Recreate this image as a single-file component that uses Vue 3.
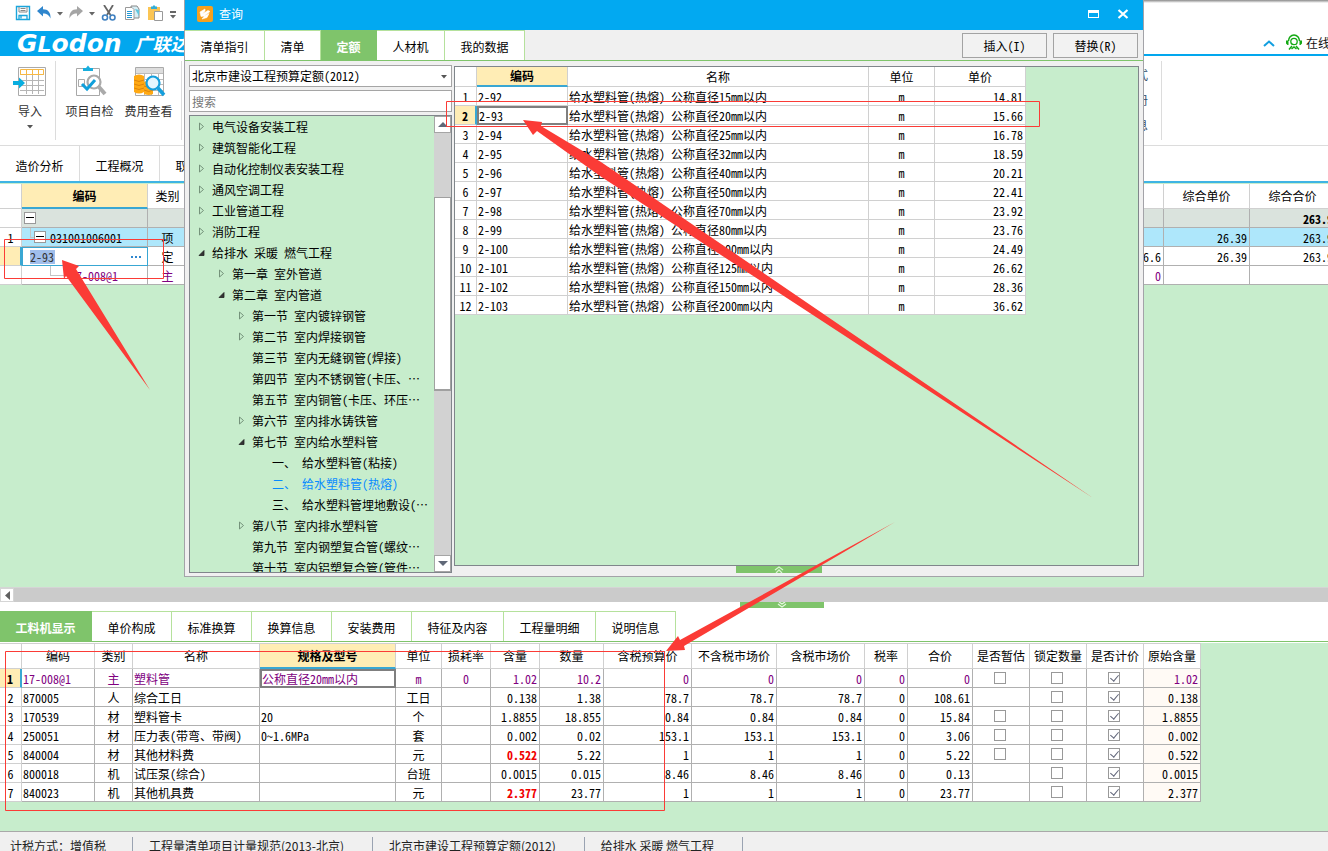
<script setup>
const dialogTabs = [
  { label: '清单指引', size: 'wide' },
  { label: '清单', size: 'short' },
  { label: '定额', size: 'short', active: true },
  { label: '人材机', size: 'mid' },
  { label: '我的数据', size: 'wide' },
]

const tree = [
  { level: 0, mark: 'closed', text: '电气设备安装工程' },
  { level: 0, mark: 'closed', text: '建筑智能化工程' },
  { level: 0, mark: 'closed', text: '自动化控制仪表安装工程' },
  { level: 0, mark: 'closed', text: '通风空调工程' },
  { level: 0, mark: 'closed', text: '工业管道工程' },
  { level: 0, mark: 'closed', text: '消防工程' },
  { level: 0, mark: 'open', text: '给排水 采暖 燃气工程' },
  { level: 1, mark: 'closed', text: '第一章 室外管道' },
  { level: 1, mark: 'open', text: '第二章 室内管道' },
  { level: 2, mark: 'closed', text: '第一节 室内镀锌钢管' },
  { level: 2, mark: 'closed', text: '第二节 室内焊接钢管' },
  { level: 2, text: '第三节 室内无缝钢管(焊接)' },
  { level: 2, text: '第四节 室内不锈钢管(卡压、…' },
  { level: 2, text: '第五节 室内铜管(卡压、环压…' },
  { level: 2, mark: 'closed', text: '第六节 室内排水铸铁管' },
  { level: 2, mark: 'open', text: '第七节 室内给水塑料管' },
  { level: 3, text: '一、 给水塑料管(粘接)' },
  { level: 3, text: '二、 给水塑料管(热熔)', active: true },
  { level: 3, text: '三、 给水塑料管埋地敷设(…' },
  { level: 2, mark: 'closed', text: '第八节 室内排水塑料管' },
  { level: 2, text: '第九节 室内钢塑复合管(螺纹…' },
  { level: 2, text: '第十节 室内铝塑复合管(管件…' },
]

const quota = [
  ['2-92', 15, '14.81'],
  ['2-93', 20, '15.66'],
  ['2-94', 25, '16.78'],
  ['2-95', 32, '18.59'],
  ['2-96', 40, '20.21'],
  ['2-97', 50, '22.41'],
  ['2-98', 70, '23.92'],
  ['2-99', 80, '23.76'],
  ['2-100', 100, '24.49'],
  ['2-101', 125, '26.62'],
  ['2-102', 150, '28.36'],
  ['2-103', 200, '36.62'],
]

const detailTabs = [
  { label: '工料机显示', active: true, wide: true },
  { label: '单价构成' },
  { label: '标准换算' },
  { label: '换算信息' },
  { label: '安装费用' },
  { label: '特征及内容', wide: true },
  { label: '工程量明细', wide: true },
  { label: '说明信息' },
]

const headers = ['编码', '类别', '名称', '规格及型号', '单位', '损耗率', '含量', '数量', '含税预算价', '不含税市场价', '含税市场价', '税率', '合价', '是否暂估', '锁定数量', '是否计价', '原始含量']

const rows = [
  { code: '17-008@1', kind: '主', name: '塑料管', spec: '公称直径20mm以内', unit: 'm', loss: '0', qty: '1.02', amount: '10.2', price: '0', total: '0', temp: true, origin: '1.02', main: true },
  { code: '870005', kind: '人', name: '综合工日', spec: '', unit: '工日', loss: '', qty: '0.138', amount: '1.38', price: '78.7', total: '108.61', temp: false, origin: '0.138' },
  { code: '170539', kind: '材', name: '塑料管卡', spec: '20', unit: '个', loss: '', qty: '1.8855', amount: '18.855', price: '0.84', total: '15.84', temp: true, origin: '1.8855' },
  { code: '250051', kind: '材', name: '压力表(带弯、带阀)', spec: '0~1.6MPa', unit: '套', loss: '', qty: '0.002', amount: '0.02', price: '153.1', total: '3.06', temp: true, origin: '0.002' },
  { code: '840004', kind: '材', name: '其他材料费', spec: '', unit: '元', loss: '', qty: '0.522', amount: '5.22', price: '1', total: '5.22', temp: true, origin: '0.522', hot: true },
  { code: '800018', kind: '机', name: '试压泵(综合)', spec: '', unit: '台班', loss: '', qty: '0.0015', amount: '0.015', price: '8.46', total: '0.13', temp: false, origin: '0.0015' },
  { code: '840023', kind: '机', name: '其他机具费', spec: '', unit: '元', loss: '', qty: '2.377', amount: '23.77', price: '1', total: '23.77', temp: false, origin: '2.377', hot: true },
]

const status = ['计税方式：增值税', '工程量清单项目计量规范(2013-北京)', '北京市建设工程预算定额(2012)', '给排水 采暖 燃气工程']
</script>

<template>
  <div class="app">
    <section class="upper">
      <div class="quick">
        <button aria-label="保存"><svg width="16" height="16" viewBox="0 0 16 16"><path d="M1.5 1.5h13v13h-13z" fill="#fff" stroke="#1aa5dc" stroke-width="1.4" /><path d="M4 2v5h8V2M5.500 3.500h5M5.500 5.500h5" fill="none" stroke="#888" /><path d="M4 14.500v-4h8v4M6 11v2.500" fill="none" stroke="#1aa5dc" stroke-width="1.300" /></svg></button>
        <button aria-label="撤销"><svg width="16" height="16" viewBox="0 0 16 16"><path d="M1 6l6-5v3.200c5 0 8 3.300 7.500 9.300C13 10 11 8.500 7 8.500v3z" fill="#2f86cd" /></svg></button>
        <button aria-label="撤销列表"><svg width="6" height="16" viewBox="0 0 6 16"><path d="M0 7h6L3 10.500z" fill="#666" /></svg></button>
        <button aria-label="恢复"><svg width="16" height="16" viewBox="0 0 16 16"><path d="M15 6L9 1v3.200c-5 0-8 3.300-7.500 9.300C3 10 5 8.500 9 8.500v3z" fill="#a5a5a5" /></svg></button>
        <button aria-label="恢复列表"><svg width="6" height="16" viewBox="0 0 6 16"><path d="M0 7h6L3 10.500z" fill="#666" /></svg></button>
        <button aria-label="剪切"><svg width="18" height="16" viewBox="0 0 18 16"><path d="M4 0l6.500 10M13 0L7 10" fill="none" stroke="#666" stroke-width="1.800" /><circle cx="5" cy="12.500" r="2.500" fill="none" stroke="#3f80c0" stroke-width="1.600" /><circle cx="12.500" cy="12.500" r="2.500" fill="none" stroke="#3f80c0" stroke-width="1.600" /></svg></button>
        <button aria-label="复制"><svg width="18" height="16" viewBox="0 0 18 16"><path d="M8 1h6l2 3v9H8z" fill="#d8eef5" stroke="#888" /><path d="M12 4l4 1v6z" fill="#5fc6df" /><path d="M2.500 2.500h6.500l2 2v10h-8.500z" fill="#fff" stroke="#999" /><path d="M4 6.500h5M4 8.500h5M4 10.500h5M4 12.500h5" stroke="#2298d5" /></svg></button>
        <button aria-label="粘贴"><svg width="18" height="16" viewBox="0 0 18 16"><path d="M2 2h12v13H2z" fill="#fbc554" /><path d="M5 4V1.500h1.500L8 0l1.500 1.500H11V4z" fill="#35add6" /><path d="M8.500 6.500h8v9h-8z" fill="#fff" stroke="#999" /></svg></button>
        <button aria-label="更多"><svg width="8" height="16" viewBox="0 0 8 16"><path d="M1 6h6v2H1zM1 10h6l-3 3.500z" fill="#666" /></svg></button>
      </div>
      <header class="brand">
        <div class="logo"><b class="latin">G<small>L</small>odon</b><b class="han">广联达</b></div>
        <div class="service">
          <svg width="12" height="8" viewBox="0 0 12 8"><path d="M1 7l5-4.500L11 7" fill="none" stroke="#139fe0" stroke-width="2" /></svg>
          <svg width="16" height="17" viewBox="0 0 16 17"><path d="M2.500 7a5.500 6 0 0 1 11 0" fill="none" stroke="#13a913" stroke-width="1.500" /><circle cx="8" cy="7.500" r="3.200" fill="none" stroke="#13a913" stroke-width="1.300" /><path d="M0 6.500h2.500v4.500H1.500L0 9.500zM16 6.500h-2.500v4.500h1l1.500-1.500z" fill="#13a913" /><path d="M3 15.500l3-3.500M13 15.500l-3-3.500M5.500 15l2.500-2 2.500 2" fill="none" stroke="#13a913" stroke-width="1.500" /></svg>
          <a href="#">在线客服</a>
        </div>
      </header>
      <div class="ribbon">
        <button class="tool import">
          <svg width="34" height="32" viewBox="0 0 34 32"><path d="M5.500 2.500h27v28h-27z" fill="#fff" stroke="#aaa" /><path d="M7 9.500h24M7 15.500h24M7 20.500h24M7 25.500h24M13.500 9v20M19.500 9v20M25.500 9v20" stroke="#b5b5b5" /><path d="M7.500 4.500h23v5h-23zM13.500 4v5M19.500 4v5M25.500 4v5" fill="none" stroke="#f7b844" /><path d="M0 16h6v-3.500l6 5.500-6 5.500V20H0z" fill="#08aee0" /></svg>
          <span>导入</span>
          <svg width="6" height="4" viewBox="0 0 6 4"><path d="M0 0h6L3 3.500z" fill="#555" /></svg>
        </button>
        <i class="rule"></i>
        <button class="tool">
          <svg width="34" height="32" viewBox="0 0 34 32"><path d="M3.500 3.500h23v27h-23z" fill="#fff" stroke="#a8a8a8" /><path d="M10 6V3h3l2-2.500L17 3h3v3z" fill="#18aedd" /><path d="M5.500 14.500h6v7h-6z" fill="none" stroke="#aaa" /><circle cx="21" cy="17" r="6.500" fill="#fff" stroke="#aaa" stroke-width="2.200" /><path d="M26 22l6 7" stroke="#aaa" stroke-width="4" /><path d="M9 19l5 5 8-9" fill="none" stroke="#109fdb" stroke-width="3" /></svg>
          <span>项目自检</span>
        </button>
        <button class="tool">
          <svg width="34" height="32" viewBox="0 0 34 32"><path d="M3.500 2.500h28v28h-28z" fill="#fff" stroke="#aaa" /><path d="M4 3h27v5H4z" fill="#ddd" /><path d="M4 8.500h27M4 14.500h27M4 19.500h27M4 25.500h27M12.500 8v22M19.500 8v22M26.500 8v22" stroke="#bbb" /><path d="M2 11q5-3 10 0v16q-5 3-10 0zM12 17q5-3 9 0v12q-4 2-9 0z" fill="#ffa913" /><path d="M2 15q5 3 10 0M2 19q5 3 10 0M2 23q5 3 10 0M12 21q5 3 9 0M12 25q5 3 9 0" stroke="#df830a" fill="none" /><circle cx="21" cy="18" r="6.500" fill="#e3f6ff" stroke="#159fdd" stroke-width="2.200" /><path d="M26 23l6 7" stroke="#159fdd" stroke-width="3.500" /></svg>
          <span>费用查看</span>
        </button>
        <i class="rule end"></i>
        <div class="options"><span>式</span><span>册</span><span>息</span></div>
        <i class="rule last"></i>
      </div>
      <nav class="pages"><button>造价分析</button><button>工程概况</button><button>取费设置</button></nav>
      <div class="main-wrap">
        <table class="grid main">
          <colgroup><col class="m0"><col class="m1"><col class="m2"><col><col class="m4"><col class="m5"></colgroup>
          <thead><tr><th></th><th class="picked">编码</th><th>类别</th><th></th><th>综合单价</th><th>综合合价</th></tr></thead>
          <tbody>
            <tr class="sum"><td></td><td class="lv0"><button class="fold" aria-label="折叠"></button></td><td></td><td></td><td></td><td class="r"><b>263.9</b></td></tr>
            <tr class="item"><td class="c">1</td><td class="lv1"><button class="fold" aria-label="折叠"></button>031001006001</td><td class="c">项</td><td></td><td class="r">26.39</td><td class="r">263.9</td></tr>
            <tr><td class="flag"></td><td class="editing"><div><input value="2-93" aria-label="编码"><button class="dots" aria-label="选择"><i></i><i></i><i></i></button></div></td><td class="c">定</td><td class="r">6.6</td><td class="r">26.39</td><td class="r">263.9</td></tr>
            <tr class="purple"><td></td><td class="lv2">17-008@1</td><td class="c">主</td><td class="r">0</td><td></td><td></td></tr>
          </tbody>
        </table>
      </div>

      <div class="dialog" role="dialog" aria-label="查询">
        <div class="title">
          <svg width="16" height="16" viewBox="0 0 16 16"><rect width="16" height="16" rx="2" fill="#f6a01e" /><path d="M3 6l5-3v2L5 8l6-3.500 2 1L7 10l5-2.500-2 4-5 1.500 2.500-3-3.500.5z" fill="#fff" stroke="#fff" stroke-width=".6" /></svg>
          <span>查询</span>
          <button class="max" aria-label="最大化"><i></i></button>
          <button class="close" aria-label="关闭"><svg width="12" height="10" viewBox="0 0 12 10"><path d="M1.500 1l9 8M10.500 1l-9 8" stroke="#fff" stroke-width="2.200" /></svg></button>
        </div>
        <div class="dtabs">
          <button v-for="t in dialogTabs" :key="t.label" :class="[t.size, { on: t.active }]">{{ t.label }}</button>
          <div class="actions"><button>插入(I)</button><button>替换(R)</button></div>
        </div>
        <div class="dbody">
          <div class="side">
            <div class="combo">
              <select aria-label="定额库"><option>北京市建设工程预算定额(2012)</option></select>
              <svg width="6" height="4" viewBox="0 0 6 4"><path d="M0 0h6L3 3.500z" fill="#555" /></svg>
            </div>
            <input class="search" placeholder="搜索" aria-label="搜索">
            <div class="treebox">
              <ul>
                <li v-for="n in tree" :key="n.text" :class="['l' + n.level, { on: n.active }]">
                  <svg width="9" height="9" viewBox="0 0 9 9"><path v-if="n.mark === 'closed'" d="M2.500 1v7l4-3.500z" fill="none" stroke="#74927a" /><path v-if="n.mark === 'open'" d="M2 7.500h5v-5z" fill="#333" stroke="#222" stroke-width=".8" /></svg>
                  <span>{{ n.text }}</span>
                </li>
              </ul>
              <div class="vbar">
                <button aria-label="向上"><svg width="10" height="5" viewBox="0 0 10 5"><path d="M0 5l5-5 5 5z" fill="#606878" /></svg></button>
                <i class="gap"></i><i class="thumb"></i><i class="rest"></i>
                <button aria-label="向下"><svg width="10" height="5" viewBox="0 0 10 5"><path d="M0 0l5 5 5-5z" fill="#606878" /></svg></button>
              </div>
            </div>
          </div>
          <div class="result">
            <div class="sheet">
              <table class="grid quota">
                <colgroup><col class="q0"><col class="q1"><col class="q2"><col class="q3"><col class="q4"></colgroup>
                <thead><tr><th></th><th class="picked">编码</th><th>名称</th><th>单位</th><th>单价</th></tr></thead>
                <tbody>
                  <tr v-for="(q, i) in quota" :key="q[0]">
                    <td :class="['c', { flag: i === 1 }]">{{ i + 1 }}</td>
                    <td :class="{ focus: i === 1 }">{{ q[0] }}</td>
                    <td>给水塑料管(热熔) 公称直径{{ q[1] }}mm以内</td>
                    <td class="c">m</td><td class="r">{{ q[2] }}</td>
                  </tr>
                </tbody>
              </table>
            </div>
            <button class="handle" aria-label="展开"><svg width="10" height="7" viewBox="0 0 10 7"><path d="M1 4l4-3 4 3M2 7l3-3 3 3" fill="none" stroke="#d9f5d0" stroke-width="1.300" /></svg></button>
          </div>
        </div>
      </div>
    </section>

    <div class="hbar"><button aria-label="向左"><svg width="5" height="9" viewBox="0 0 5 9"><path d="M5 0v9L0 4.500z" fill="#606060" /></svg></button></div>

    <section class="lower">
      <div class="split"><button class="handle" aria-label="收起"><svg width="10" height="6" viewBox="0 0 10 6"><path d="M2 0l3 2 3-2M1 2l4 3 4-3" fill="none" stroke="#e3f8dc" stroke-width="1.300" /></svg></button></div>
      <nav class="tabs"><button v-for="t in detailTabs" :key="t.label" :class="{ on: t.active, wide: t.wide }">{{ t.label }}</button></nav>
      <div class="detail-wrap">
        <table class="grid detail">
          <colgroup><col v-for="n in 18" :key="n" :class="'d' + n"></colgroup>
          <thead><tr><th></th><th v-for="h in headers" :key="h" :class="{ picked: h === '规格及型号' }">{{ h }}</th></tr></thead>
          <tbody>
            <tr v-for="(r, i) in rows" :key="r.code" :class="{ purple: r.main }">
              <td :class="['c', 'num', { flag: r.main }]">{{ i + 1 }}</td>
              <td>{{ r.code }}</td>
              <td class="c">{{ r.kind }}</td>
              <td>{{ r.name }}</td>
              <td :class="{ focus: r.main }">{{ r.spec }}</td>
              <td class="c">{{ r.unit }}</td>
              <td class="c">{{ r.loss }}</td>
              <td :class="['r', { hot: r.hot }]">{{ r.qty }}</td>
              <td class="r">{{ r.amount }}</td>
              <td class="r">{{ r.price }}</td>
              <td class="r">{{ r.price }}</td>
              <td class="r">{{ r.price }}</td>
              <td class="r">0</td>
              <td class="r">{{ r.total }}</td>
              <td class="c"><input v-if="r.temp" type="checkbox" aria-label="是否暂估"></td>
              <td class="c"><input type="checkbox" aria-label="锁定数量"></td>
              <td class="c"><input type="checkbox" checked aria-label="是否计价"></td>
              <td class="r origin">{{ r.origin }}</td>
            </tr>
          </tbody>
        </table>
      </div>
    </section>
    <footer class="status"><span v-for="s in status" :key="s">{{ s }}</span></footer>

    <svg class="notes" width="1328" height="851" viewBox="0 0 1328 851" aria-hidden="true">
      <g fill="none" stroke="#fb3b36"><path d="M4.500 239.500h159v39h-159zM446.500 101.500h593v25h-593zM5.500 651.500h659v159h-659z" /></g>
      <g fill="#fb3b36">
        <path d="M62 260l17 6-3 3 74 121-84-114-2 3z" />
        <path d="M523 120l19 2-1 4 60 36 492 336-493-322-63-45-4 4z" />
        <path d="M666 651l12-15 2 4 215-118-211 124 1 4z" />
      </g>
    </svg>
  </div>
</template>

<style>
html, body, #app { height: 100%; }
body { margin: 0; overflow: hidden; }
</style>

<style scoped>
* { box-sizing: border-box; }
.app { position: relative; display: flex; flex-direction: column; min-height: 100%; height: 100%; overflow: hidden; background: #c7edcc; color: #000; font: 12px/18px "Noto Sans CJK SC", sans-serif; font-feature-settings: "hwid" 1; }
button, input, select { font: inherit; font-feature-settings: inherit; color: inherit; margin: 0; padding: 0; border: 0; border-radius: 0; background: none; outline: 0; }
svg { display: block; flex: none; }
i { font-style: normal; }
.upper { position: relative; flex: 1; min-height: 0; display: flex; flex-direction: column; background: #fff; }
.quick { display: flex; align-items: center; gap: 5px; height: 31px; padding: 0 0 5px 15px; background: linear-gradient(#8a8a8a, #fff) right top / 276px 3px no-repeat #fff; }
.brand { display: flex; justify-content: space-between; height: 25px; border-bottom: 2px solid #02a7ee; flex: none; }
.logo { display: flex; align-items: center; gap: 13px; height: 25px; width: 400px; padding-left: 17px; background: #02a7ee; color: #fff; white-space: nowrap; }
.latin { font: oblique bold 25px/25px "DejaVu Sans", sans-serif; }
.latin small { font-size: 22px; }
.han { font: italic bold 18px/25px "Noto Sans CJK SC", sans-serif; }
.service { display: flex; align-items: center; gap: 11px; width: 65px; overflow: hidden; white-space: nowrap; }
.service a { color: #111; text-decoration: none; margin-left: -7px; }
.ribbon { display: flex; height: 90px; padding: 5px 0; border-bottom: 1px solid #dcdcdc; color: #333; flex: none; }
.tool { display: flex; flex-direction: column; align-items: center; width: 59px; padding-top: 4px; gap: 5px; line-height: 18px; white-space: nowrap; }
.tool svg + span { display: block; }
.import { width: 55px; padding-left: 5px; }
.rule { width: 1px; height: 79px; background: #dcdcdc; margin-right: 4px; }
.rule.end { margin-left: 3px; }
.rule.last { margin: 0 166px 0 13px; }
.options { margin-left: auto; display: flex; flex-direction: column; gap: 7px; padding-top: 5px; color: #35506b; }
.pages { display: flex; height: 37px; border-bottom: 2px solid #3fb4e4; flex: none; }
.pages button { width: 80px; border-right: 1px solid #dcdcdc; padding-top: 4px; }
.main-wrap { flex: 1; min-height: 0; overflow: hidden; background: #c7edcc; padding-top: 1px; }
.grid { border-collapse: separate; border-spacing: 0; table-layout: fixed; line-height: 16px; background: #fff; }
.grid th { font-weight: 400; padding: 0; border-right: 1px solid #d0d0d0; border-bottom: 1px solid #d0d0d0; white-space: nowrap; }
.grid td { height: 19px; padding: 2px 1px 0; border-right: 1px solid #b0b0b0; border-bottom: 1px solid #b0b0b0; white-space: nowrap; overflow: hidden; }
.grid td:first-child { border-color: #d0d0d0; padding-left: 0; padding-right: 0; }
.grid .c { text-align: center; }
.grid .r { text-align: right; padding-right: 2px; }
.grid .picked { background: #ffedb5; font-weight: 700; border-bottom: 2px solid #39a7d3; }
.grid td.flag { background: #ffedb5; font-weight: 700; border-right: 2px solid #39a7d3; }
.grid .focus { padding: 0; border: 2px solid #7f7f7f; line-height: 15px; }
.grid .purple td:not(.num) { color: #800080; }
.grid .num { color: #000; }
.main { width: calc(100% + 8px); }
.main th { height: 25px; }
.m0 { width: 22px; } .m1 { width: 126px; } .m2 { width: 40px; } .m4 { width: 86px; } .m5 { width: 86px; }
.main .sum td:not(:first-child) { background: #dae3dd; }
.main .item td:not(:first-child) { background: #aee7fb; }
.main .lv0 { padding-left: 2px; }
.main .lv1 { position: relative; padding-left: 12px; }
.main .lv2 { position: relative; padding-left: 48px; }
.lv1::before, .lv2::before { content: ""; position: absolute; left: 8px; top: 0; width: 4px; height: 9px; border: solid #c4c4c4; border-width: 0 0 1px 1px; }
.lv2::before { left: 28px; width: 17px; }
.fold { position: relative; width: 12px; height: 12px; border: 1px solid #999; background: #fff; vertical-align: top; margin: 1px 4px 0 0; }
.fold::after { content: ""; position: absolute; left: 1px; right: 1px; top: 4px; height: 1px; background: #000; }
.main .editing { border: 1px solid #39a7d3; padding: 0 6px 0 7px; }
.editing div { display: flex; justify-content: space-between; align-items: center; height: 16px; }
.editing input { width: 25px; height: 14px; background: #a0beeb; color: #333; }
.dots { display: flex; gap: 2px; }
.dots i { width: 2px; height: 2px; background: #2e87cf; }

.dialog { position: absolute; top: 0; bottom: 10px; left: 184px; right: 184px; display: flex; flex-direction: column; background: #f0f0f0; border: 1px solid #a3a3a8; border-top: 0; }
.title { display: flex; align-items: center; height: 30px; padding: 0 14px 2px 12px; background: #02a9f1; color: #fff; flex: none; }
.title span { margin: 0 auto 0 6px; }
.max { margin-right: 18px; }
.max i { display: block; width: 11px; height: 8px; border: 1px solid #fff; border-top-width: 3px; }
.dtabs { display: flex; height: 31px; border-bottom: 1px solid #7fc46b; flex: none; }
.dtabs > button { background: #fff; border-right: 1px solid #b5e19c; border-top: 1px solid #b5e19c; padding-top: 3px; }
.dtabs .wide { width: 80px; } .dtabs .short { width: 56px; } .dtabs .mid { width: 68px; }
.dtabs .on { background: #7fc46b; color: #fff; font-weight: 700; border-color: #7fc46b; }
.actions { display: flex; gap: 6px; margin: 3px 5px 2px auto; }
.actions button { width: 85px; border: 1px solid #a3a3a3; background: #f2f2f2; }
.dbody { flex: 1; min-height: 0; display: flex; gap: 2px; padding: 4px 4px 3px; }
.side { display: flex; flex-direction: column; gap: 3px; width: 263px; }
.combo { position: relative; height: 22px; flex: none; }
.combo select { appearance: none; width: 100%; height: 22px; border: 1px solid #a5a5a5; background: #fff; padding: 0 12px 0 2px; }
.combo svg { position: absolute; right: 5px; top: 10px; }
.search { height: 22px; border: 1px solid #a5a5a5; background: #fff; padding: 0 2px; flex: none; }
.search::placeholder { color: #777; opacity: 1; }
.treebox { display: flex; flex: 1; min-height: 0; border: 1px solid #80868b; background: #c7edcc; }
.treebox ul { flex: 1; min-width: 0; margin: 0; padding: 0; list-style: none; overflow: hidden; }
.treebox li { display: flex; align-items: center; gap: 6px; height: 21px; white-space: nowrap; }
.l0 { padding-left: 7px; } .l1 { padding-left: 27px; } .l2 { padding-left: 47px; } .l3 { padding-left: 67px; }
.treebox .on { color: #078bff; }
.vbar { display: flex; flex-direction: column; width: 17px; background: #d2d2d2; }
.vbar button { display: grid; place-items: center; height: 17px; border: 1px solid #a5a5a5; background: #fff; }
.gap { flex: 64; } .thumb { flex: 193; background: #fff; border: 1px solid #a0a0a0; border-width: 1px 1px 2px; } .rest { flex: 165; }
.result { flex: 1; min-width: 0; display: flex; flex-direction: column; align-items: center; padding-top: 1px; }
.sheet { flex: 1; min-height: 0; align-self: stretch; border: 1px solid #80868b; background: #c7edcc; overflow: hidden; }
.result .handle { display: grid; place-items: center; width: 86px; height: 7px; margin: 0 35px 0 0; background: #7fc46b; flex: none; }
.quota { width: 571px; }
.quota th { height: 20px; }
.quota td:not(.focus):not(.flag) { border-color: #d0d0d0; }
.q0 { width: 22px; } .q1 { width: 91px; } .q2 { width: 301px; } .q3 { width: 66px; } .q4 { width: 91px; }

.hbar { display: flex; height: 15px; border-top: 1px solid #d5d5d5; background: #cbcbcb; flex: none; }
.hbar button { display: grid; place-items: center; width: 14px; background: #fff; border: 1px solid #d5d5d5; }
.lower { flex: none; background: #fff; }
.split { height: 9px; padding-left: 740px; }
.split .handle { display: grid; place-items: center; width: 84px; height: 6px; background: #7fc46b; }
.tabs { display: flex; height: 31px; border-bottom: 1px solid #7fc46b; }
.tabs button { width: 80px; border-top: 1px solid #b5e19c; border-right: 1px solid #b5e19c; padding-top: 3px; }
.tabs .wide { width: 92px; }
.tabs .on { background: #7fc46b; color: #fff; font-weight: 700; border-color: #7fc46b; }
.detail-wrap { margin-top: 1px; padding-bottom: 29px; background: #c7edcc; overflow: hidden; }
.detail { width: 1201px; }
.detail th { height: 26px; border-top: 1px solid #d0d0d0; }
.d1 { width: 22px; } .d2 { width: 73px; } .d3 { width: 38px; } .d4 { width: 127px; } .d5 { width: 136px; } .d6 { width: 46px; }
.d7, .d8 { width: 49px; } .d9 { width: 64px; } .d10, .d12 { width: 88px; } .d11 { width: 85px; } .d13 { width: 43px; } .d14 { width: 65px; }
.d15, .d16, .d17, .d18 { width: 57px; }
.detail .hot { color: #f00000; font-weight: 700; }
.detail .origin { background: #fffaf5; }
.detail input { display: block; position: relative; appearance: none; width: 12px; height: 12px; border: 1px solid #999; background: #fff; margin: -2px auto 0 20px; }
.detail input:checked::after { content: ""; position: absolute; left: 3px; top: 0; width: 4px; height: 7px; border: solid #5f6478; border-width: 0 1px 1px 0; transform: rotate(40deg); }
.status { display: flex; height: 20px; overflow: hidden; border-top: 1px solid #a9a9a9; background: #f0f0f0; color: #222; font-feature-settings: normal; padding-top: 5px; flex: none; white-space: nowrap; }
.status span { padding: 0 28px 0 16px; border-right: 1px solid #9aa3b2; height: 20px; }
.status span:first-child { padding: 0 26px 0 10px; }
.notes { position: absolute; left: 0; top: 0; pointer-events: none; }
</style>
